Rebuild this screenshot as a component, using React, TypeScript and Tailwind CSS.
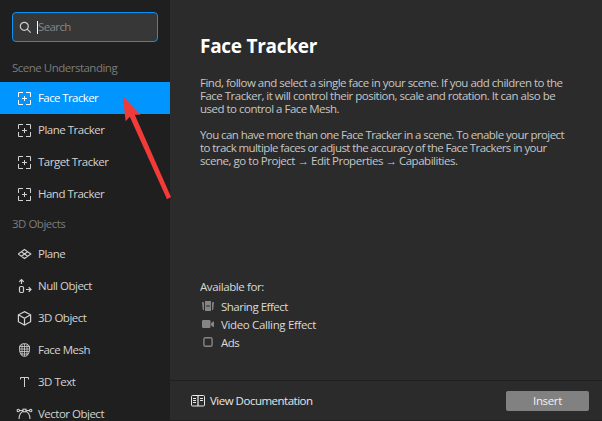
import React from "react";

const stroke = { fill: "none", stroke: "currentColor", strokeWidth: 1 } as const;

function TrackerIcon() {
  return (
    <svg width="14" height="14" viewBox="0 0 14 14" {...stroke}>
      <path d="M.5 6V1.500H5M8 1.500h4.500V6M12.500 9v4.500H8M5 13.500H.5V9" />
      <path d="M4 7.500h5M6.500 5v5" />
    </svg>
  );
}

function PlaneIcon() {
  return (
    <svg width="14" height="14" viewBox="0 0 14 14" {...stroke} strokeWidth={1.1}>
      <path d="M6.500 2.500 12.800 7 6.500 11.500.2 7ZM3.400 4.800l6.200 4.400M9.600 4.800 3.400 9.200" />
    </svg>
  );
}

function NullIcon() {
  return (
    <svg width="14" height="14" viewBox="0 0 14 14" {...stroke} strokeWidth={1.2} className="overflow-visible">
      <rect x="1.500" y="7.500" width="4" height="6" rx="1.200" />
      <path d="M3.500 5V.8M1.200 2.900 3.500.6l2.300 2.300M8 10.500h4.800M10.700 8.300l2.300 2.200-2.300 2.200" />
    </svg>
  );
}

function CubeIcon() {
  return (
    <svg width="14" height="14" viewBox="0 0 14 14" {...stroke} strokeWidth={1.2} className="overflow-visible">
      <path d="M6.500.6 12.600 3.800v6.900L6.500 14 .4 10.700V3.800ZM.4 3.800l6.100 3.400 6.100-3.400M6.500 7.200V14" />
    </svg>
  );
}

function MeshIcon() {
  return (
    <svg width="14" height="14" viewBox="0 0 14 14" {...stroke}>
      <path d="M6.500.7c3.300 0 5 1.400 5 4.400 0 4.300-1.400 8.200-5 8.200s-5-3.900-5-8.200C1.500 2.100 3.200.7 6.500.7Z" />
      <path d="M4 1.500v11M6.500 1v12M9 1.500v11M1.500 3.500h10M1.500 6h10M1.800 8.500h9.400M3 11h7" strokeWidth=".8" />
    </svg>
  );
}

function TextIcon() {
  return (
    <svg width="14" height="14" viewBox="0 0 14 14" {...stroke}>
      <path d="M2.500 4.500v-2h8v2M6.500 2.500V12" />
    </svg>
  );
}

function VectorIcon() {
  return (
    <svg width="14" height="14" viewBox="0 0 14 14" {...stroke} strokeWidth={1.1} className="overflow-visible">
      <path d="M1 3.500h11M1 12c0-4 2-8 5.500-8S12 8 12 12" />
      <circle cx=".3" cy="3.500" r="1.200" fill="#1f1f1f" />
      <circle cx="12.700" cy="3.500" r="1.200" fill="#1f1f1f" />
      <rect x="5" y="2.200" width="3" height="2.600" fill="#1f1f1f" />
    </svg>
  );
}

function SharingIcon() {
  return (
    <svg width="12" height="10" viewBox="0 0 12 10" fill="currentColor">
      <path d="M3 0h6v10H3ZM4 4.500v1h4v-1Z" fillRule="evenodd" />
      <path d="M0 1h1.200l.8 1v7H.8ZM12 1h-1.200l-.8 1v7h1.200Z" />
    </svg>
  );
}

function VideoIcon() {
  return (
    <svg width="12" height="10" viewBox="0 0 12 10" fill="currentColor">
      <rect y="1" width="8.500" height="8" rx="1.200" />
      <path d="M9 4.200 11 2.500h1v5.500h-1L9 6.200Z" />
    </svg>
  );
}

function AdsIcon() {
  return (
    <svg width="12" height="10" viewBox="0 0 12 10" fill="none" stroke="currentColor" strokeWidth="1.400">
      <rect x="1.900" y=".800" width="8.200" height="8.400" rx="1.500" />
    </svg>
  );
}

function BookIcon() {
  return (
    <svg width="14" height="12" viewBox="0 0 14 12" {...stroke}>
      <path d="M.5 1.500q0-1 1-1h11q1 0 1 1v8.500q0 1-1 1h-11q-1 0-1-1Z" />
      <path d="M7 1v10" strokeWidth="1.800" opacity=".7" />
      <path d="M2 3.500h3M2 5.500h3M2 7.500h3M9 3.500h3M9 5.500h3" />
    </svg>
  );
}

type Item = { label: string; icon: React.ReactNode; active?: boolean };

const understanding: Item[] = [
  { label: "Face Tracker", icon: <TrackerIcon />, active: true },
  { label: "Plane Tracker", icon: <TrackerIcon /> },
  { label: "Target Tracker", icon: <TrackerIcon /> },
  { label: "Hand Tracker", icon: <TrackerIcon /> },
];

const objects: Item[] = [
  { label: "Plane", icon: <PlaneIcon /> },
  { label: "Null Object", icon: <NullIcon /> },
  { label: "3D Object", icon: <CubeIcon /> },
  { label: "Face Mesh", icon: <MeshIcon /> },
  { label: "3D Text", icon: <TextIcon /> },
  { label: "Vector Object", icon: <VectorIcon /> },
];

function Section({ title, items }: { title: string; items: Item[] }) {
  return (
    <section>
      <h2 className="flex h-7 items-center pl-3 text-[#7c7c7c]">{title}</h2>
      {items.map((item) => (
        <div
          key={item.label}
          className={`flex h-8 items-center gap-[6px] pl-[18px] ${item.active ? "bg-[#0095ff] tracking-[-0.600px] text-white" : "text-[#d2d2d2]"}`}
        >
          <span className="flex w-[14px] shrink-0 justify-center">{item.icon}</span>
          <span>{item.label}</span>
        </div>
      ))}
    </section>
  );
}

const targets = [
  { label: "Sharing Effect", icon: <SharingIcon />, tracking: "tracking-[-0.500px]" },
  { label: "Video Calling Effect", icon: <VideoIcon />, tracking: "tracking-[-0.350px]" },
  { label: "Ads", icon: <AdsIcon />, tracking: "tracking-[-0.500px]" },
];

export default function App() {
  return (
    <div className="relative flex h-[421px] w-[602px] overflow-hidden border-b border-[#1f1f1f] bg-[#2b2b2b] font-['Open_Sans','Noto_Sans',sans-serif] text-[11.500px] tracking-[-0.500px] whitespace-nowrap">
      <aside className="h-full w-[170px] shrink-0 overflow-hidden bg-[#1f1f1f] pt-3">
        <div className="mx-3 mb-3 flex h-[30px] items-center rounded border border-[#0892f5] bg-[#373737] pl-1.5">
          <svg width="13" height="13" viewBox="0 0 13 13" fill="none" stroke="#cccccc" strokeWidth="1.200">
            <circle cx="5.300" cy="5.300" r="4" />
            <path d="m8.200 8.200 3.500 3.500" />
          </svg>
          <span className="ml-[5px] h-[13px] w-px bg-white" />
          <span className="tracking-[-0.600px] text-[#858585]">Search</span>
        </div>
        <Section title="Scene Understanding" items={understanding} />
        <Section title="3D Objects" items={objects} />
      </aside>

      <main className="flex min-w-0 flex-1 flex-col">
        <div className="flex flex-1 flex-col pt-[33px] pl-[30px]">
          <h1 className="text-[19px] leading-[26px] font-bold tracking-[-0.280px] text-white">Face Tracker</h1>
          <div className="mt-[17px] leading-[13px] tracking-[-0.500px] text-[#c6c6c6]">
            <p>
              Find, follow and select a single face in your scene. If you add children to the
              <br />
              Face Tracker, it will control their position, scale and rotation. It can also be
              <br />
              used to control a Face Mesh.
            </p>
            <p className="mt-[13px] tracking-[-0.580px]">
              You can have more than one Face Tracker in a scene. To enable your project
              <br />
              to track multiple faces or adjust the accuracy of the Face Trackers in your
              <br />
              <span className="tracking-[-0.480px]">scene, go to Project → Edit Properties → Capabilities.</span>
            </p>
          </div>
          <div className="mt-auto mb-7 text-[#dadada]">
            <p className="mb-[2px] h-[18px] leading-[18px] tracking-[-0.400px]">Available for:</p>
            {targets.map((t) => (
              <div key={t.label} className="flex h-[18px] items-center pl-[2px]">
                <span className="mb-[3px] text-[#858585]">{t.icon}</span>
                <span className={`ml-[7px] ${t.tracking}`}>{t.label}</span>
              </div>
            ))}
          </div>
        </div>
        <footer className="flex h-10 items-center justify-between border-t border-[#1f1f1f] pr-[13px] pl-[21px]">
          <div className="flex items-center gap-[5px] text-[#e6e6e6]">
            <BookIcon />
            <span>View Documentation</span>
          </div>
          <button className="h-5 w-[83px] rounded-[2px] bg-[#818181] tracking-[-0.350px] text-[#f2f2f2]">Insert</button>
        </footer>
      </main>

      {/* Pointer laid over the selected row */}
      <svg className="absolute top-[95px] left-[121px]" width="52" height="106" viewBox="0 0 52 106" fill="#f23a39">
        <path d="M2 1.500 19.500 19.700h-5.700L50 102l-4 2.300L8.800 21.800 4.600 26.200Z" />
      </svg>
    </div>
  );
}
